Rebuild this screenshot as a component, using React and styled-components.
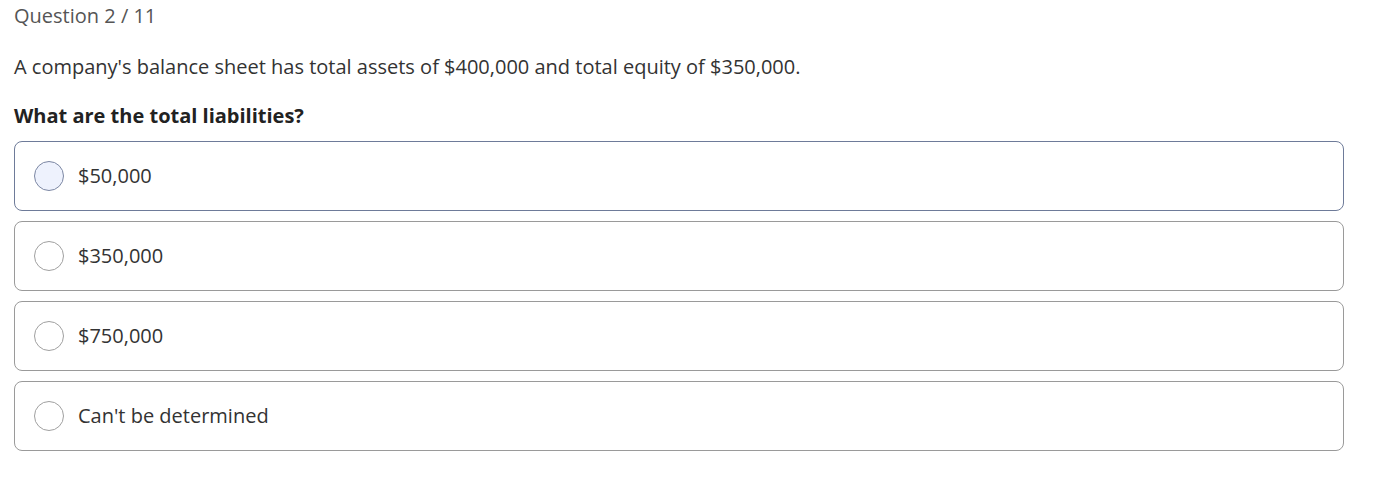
import React from "react";
import styled, { createGlobalStyle } from "styled-components";

const Global = createGlobalStyle`
  html, body { margin: 0; padding: 0; background: #fff; }
  body { font-family: "Open Sans", "Liberation Sans", sans-serif; }
`;

const Page = styled.div`
  padding: 2px 29px 20px 14px;
  display: flex;
  flex-direction: column;
`;

const Counter = styled.div`
  font-size: 20px;
  line-height: 27px;
  color: #555;
`;

const Prompt = styled.p`
  margin: 24px 0 0;
  font-size: 20px;
  line-height: 27px;
  color: #333;
`;

const Ask = styled.p`
  margin: 22px 0 0;
  font-size: 20px;
  line-height: 27px;
  font-weight: 700;
  color: #222;
`;

const Options = styled.div`
  margin-top: 12px;
  display: flex;
  flex-direction: column;
  gap: 10px;
`;

const Option = styled.label`
  display: flex;
  align-items: center;
  gap: 14px;
  height: 70px;
  box-sizing: border-box;
  padding: 0 19px;
  border: 1px solid ${(p) => (p.$active ? "#6e7b99" : "#9a9a9a")};
  border-radius: 8px;
  cursor: pointer;
`;

const Radio = styled.span`
  width: 30px;
  height: 30px;
  box-sizing: border-box;
  border-radius: 50%;
  border: 1px solid ${(p) => (p.$active ? "#7c87a3" : "#a0a0a0")};
  background: ${(p) => (p.$active ? "#eef2fd" : "#fff")};
  flex: none;
`;

const OptionText = styled.span`
  font-size: 20px;
  line-height: 27px;
  padding-bottom: 2px;
  color: #333;
`;

const choices = ["$50,000", "$350,000", "$750,000", "Can't be determined"];

export default function App() {
  return (
    <>
      <Global />
      <Page>
        <Counter>Question 2 / 11</Counter>
        <Prompt>
          A company's balance sheet has total assets of $400,000 and total equity of $350,000.
        </Prompt>
        <Ask>What are the total liabilities?</Ask>
        <Options>
          {choices.map((c, i) => (
            <Option key={c} $active={i === 0}>
              <Radio $active={i === 0} />
              <OptionText>{c}</OptionText>
            </Option>
          ))}
        </Options>
      </Page>
    </>
  );
}
